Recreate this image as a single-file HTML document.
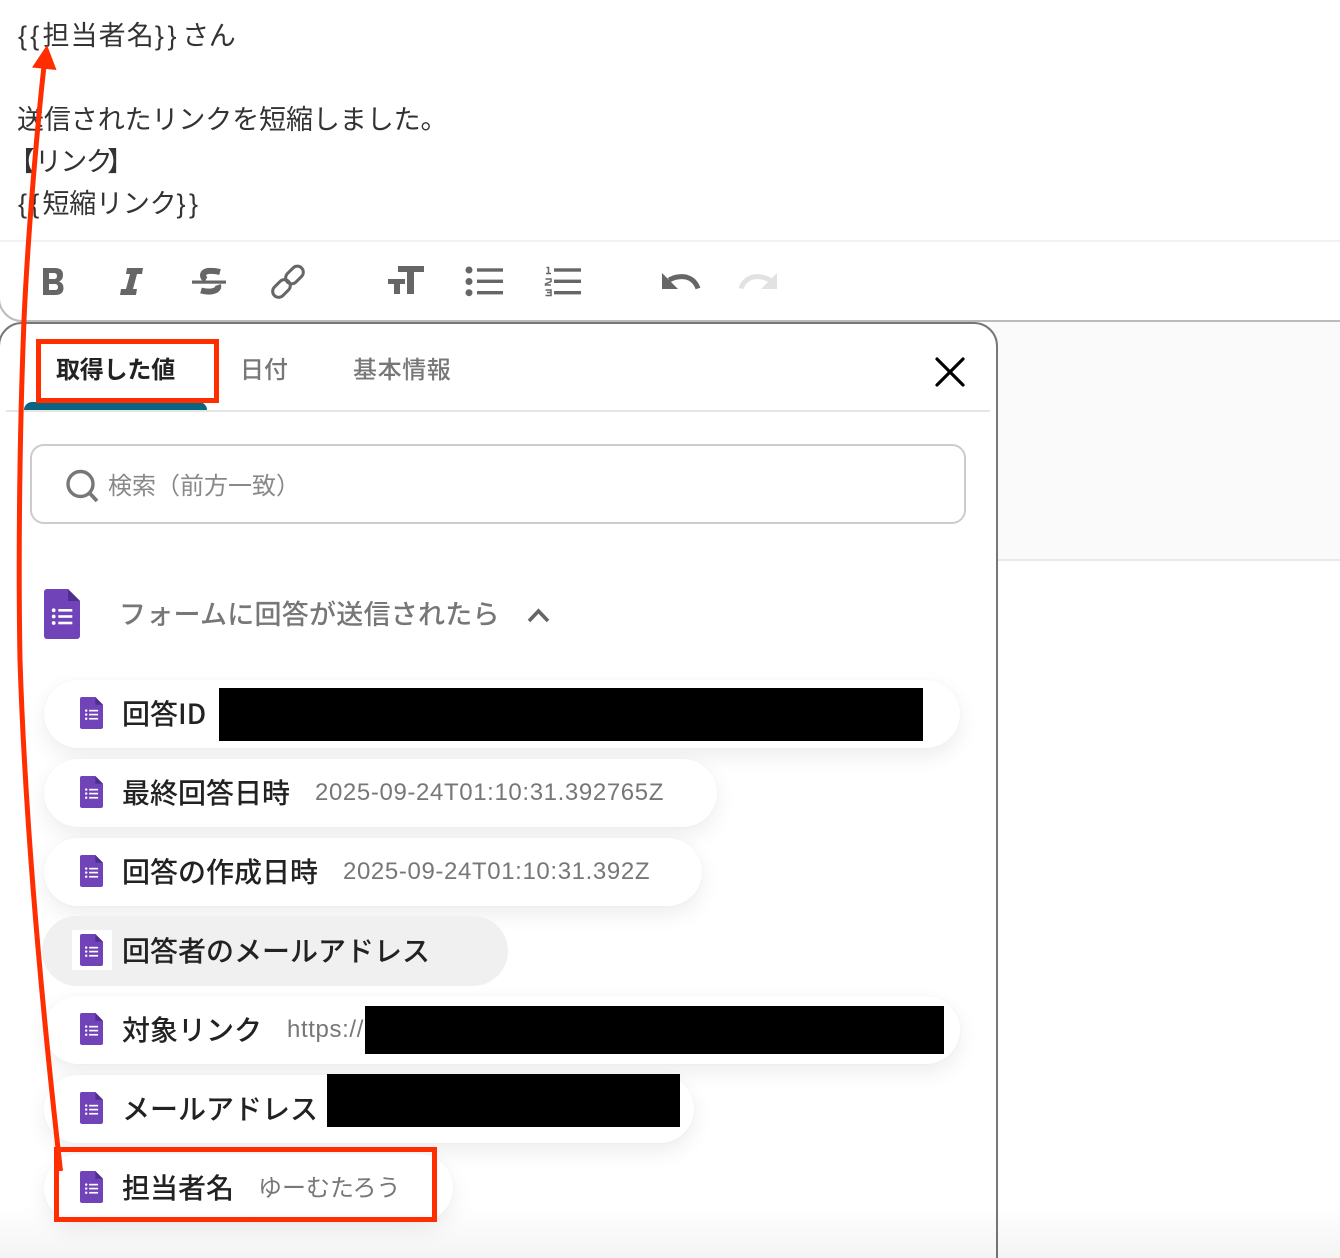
<!DOCTYPE html>
<html lang="ja"><head><meta charset="utf-8"><title>担当者名</title>
<style>
html,body{margin:0;padding:0;background:#fff;width:1340px;height:1258px;overflow:hidden}
body{font-family:"Liberation Sans","Noto Sans CJK JP",sans-serif;color:#222}
#root{position:relative;width:1340px;height:1258px;overflow:hidden}
div{box-sizing:border-box}
.a{position:absolute}
.t{position:absolute;white-space:nowrap}
.ed{font-size:27px;line-height:42px;color:#333;height:42px;left:17px;letter-spacing:-.1px}
.ed b{font-weight:400;letter-spacing:3.6px}
.tab{position:absolute;white-space:nowrap;font-size:24px;line-height:36px;height:36px;top:350px;color:#777;font-weight:500;font-family:"Noto Sans CJK JP",sans-serif}
.pill{position:absolute;left:44px;height:68px;border-radius:34px;background:#fff;box-shadow:0 8px 22px rgba(0,0,0,.075),0 0 3px rgba(0,0,0,.03)}
.lb{position:absolute;left:122px;font-size:28px;line-height:40px;height:40px;white-space:nowrap;font-weight:500;color:#222;font-family:"Noto Sans CJK JP",sans-serif}
.v{position:absolute;font-size:24px;line-height:36px;height:36px;white-space:nowrap;color:#777;letter-spacing:.62px}
.ic{position:absolute;left:80px;width:23px;height:32px}
.k{position:absolute;background:#000}
.r{position:absolute;border:5px solid #ff2d00}
</style></head>
<body><div id="root">
<svg width="0" height="0" style="position:absolute"><defs>
<symbol id="f" viewBox="0 0 36 50">
<path fill="#7044b8" d="M3 0H24L36 12V47a3 3 0 0 1-3 3H3a3 3 0 0 1-3-3V3a3 3 0 0 1 3-3Z"/>
<path fill="#4f2e92" d="M24 0L36 12H24Z"/>
<g fill="#fff"><circle cx="9.7" cy="21.3" r="1.9"/><circle cx="9.7" cy="27.5" r="1.9"/><circle cx="9.7" cy="34" r="1.9"/><rect x="14.3" y="20" width="14" height="2.6"/><rect x="14.3" y="26.2" width="14" height="2.6"/><rect x="14.3" y="32.7" width="14" height="2.6"/></g>
</symbol></defs></svg>

<!-- right background -->
<div class="a" style="left:990px;top:322px;width:350px;height:239px;background:#fafafa;border-bottom:2px solid #e9e9e9"></div>

<!-- editor -->
<div class="a" style="left:-2px;top:-30px;width:1360px;height:352px;border:2px solid #bbb;border-radius:0 0 0 24px;background:#fff"></div>
<div class="a" style="left:0;top:240px;width:1340px;height:2px;background:#f2f2f2"></div>
<div class="t ed" style="top:15px;left:18px"><b style="letter-spacing:3.2px">{{</b><span style="letter-spacing:1.1px">担当者名</span><b>}}</b><span style="margin-left:2px;letter-spacing:-.3px">さん</span></div>
<div class="t ed" style="top:99px">送信されたリンクを短縮しました。</div>
<div class="t ed" style="top:141px"><span style="margin-left:-9px">【</span><span style="letter-spacing:-1.6px">リンク</span><span style="margin-left:-4px">】</span></div>
<div class="t ed" style="top:183px;left:18px"><b style="letter-spacing:3.2px">{{</b><span style="letter-spacing:-.2px">短縮リンク</span><b>}}</b></div>

<!-- toolbar -->
<svg class="a" style="left:0;top:0" width="800" height="320" viewBox="0 0 800 320">
<g fill="#666">
<path fill-rule="evenodd" d="M43 268H55Q63 268 63 275Q63 280 59 281.5Q63.5 283 63.5 288Q63.5 295 55 295H43ZM49 273V279H54Q57 279 57 276Q57 273 54 273ZM49 284V290H55Q58 290 58 287Q58 284 55 284Z"/>
<path d="M127 268H143L142 274H137L133 289H137L136 295H120L121 289H126L130 274H126Z"/>
<rect x="192" y="280.5" width="34" height="3.2"/>
<path d="M398 266H424V272H414V294H407V272H398Z"/>
<path d="M388 279H405V284H400V294H394V284H388Z"/>
<circle cx="469" cy="270" r="3.5"/><circle cx="469" cy="281.5" r="3.5"/><circle cx="469" cy="292.7" r="3.5"/>
<rect x="477" y="268.3" width="26" height="3.4"/><rect x="477" y="279.6" width="26" height="3.4"/><rect x="477" y="291" width="26" height="3.4"/>
<rect x="554" y="268.3" width="27" height="3.4"/><rect x="554" y="279.6" width="27" height="3.4"/><rect x="554" y="291" width="27" height="3.4"/>
<path d="M662 273V289H678Z"/>
</g>
<path d="M220 272Q214 270.5 208 271Q203 272 203 275.5Q203 278 206 279.5" fill="none" stroke="#666" stroke-width="6"/>
<path d="M218 285Q219 288 216 290Q210 293 201 290.5" fill="none" stroke="#666" stroke-width="6"/>
<g fill="none" stroke="#666" stroke-width="3">
<rect x="284.5" y="269" width="20" height="12" rx="6" transform="rotate(-45 294.5 275)"/>
<rect x="271.5" y="282.5" width="20" height="12" rx="6" transform="rotate(-45 281.5 288.5)"/>
</g>
<g fill="none" stroke="#666" stroke-width="1.5">
<path d="M546.5 267.5H548.5V273.5M546 273.5H551"/>
<path d="M545.5 279H551V281.5L545.5 284V285H551"/>
<path d="M545.5 290H551V292.5H547M551 292.5V295.5H545.5"/>
</g>
<path d="M669 280Q677 275.5 686 277Q695 279.5 698 288.5" fill="none" stroke="#666" stroke-width="5"/>
<path d="M777 273V289H761Z" fill="#e2e2e2"/>
<path d="M770 280Q762 275.5 753 277Q744 279.5 741 288.5" fill="none" stroke="#e2e2e2" stroke-width="5"/>
</svg>

<!-- panel -->
<div class="a" style="left:-2px;top:322px;width:1000px;height:960px;background:#fff;border:2px solid #777;border-radius:24px 24px 0 0"></div>
<div class="a" style="left:6px;top:410px;width:984px;height:2px;background:#e5e5e5"></div>
<div class="a" style="left:24px;top:402px;width:183px;height:8px;background:#0a6583;border-radius:8px 8px 0 0"></div>
<div class="tab" style="left:56px;color:#222;font-weight:700;letter-spacing:-.2px">取得した値</div>
<div class="tab" style="left:240px">日付</div>
<div class="tab" style="left:353px;letter-spacing:.6px">基本情報</div>
<svg class="a" style="left:930px;top:352px" width="40" height="40"><path d="M7 7L33 33M33 7L7 33" stroke="#000" stroke-width="3.2" stroke-linecap="round" fill="none"/></svg>

<!-- search -->
<div class="a" style="left:30px;top:444px;width:936px;height:80px;border:2px solid #ccc;border-radius:14px;background:#fff"></div>
<svg class="a" style="left:60px;top:464px" width="44" height="44" fill="none" stroke="#777"><circle cx="20.5" cy="20" r="12.5" stroke-width="3.4"/><path d="M29.5 29L37 37" stroke-width="3.8"/></svg>
<div class="t" style="left:108px;top:466px;font-size:24px;line-height:36px;color:#888;font-family:'Noto Sans CJK JP',sans-serif;font-weight:400">検索（前方一致）</div>

<!-- section -->
<svg class="a" style="left:44px;top:589px" width="36" height="50"><use href="#f"/></svg>
<div class="t" style="left:119px;top:593px;font-size:27px;line-height:40px;letter-spacing:.25px;color:#777;font-weight:500;font-family:'Noto Sans CJK JP',sans-serif">フォームに回答が送信されたら</div>
<svg class="a" style="left:524px;top:604px" width="30" height="22"><path d="M5 17L14.5 7L24 17" fill="none" stroke="#666" stroke-width="3.6"/></svg>

<!-- rows -->
<div class="pill" style="top:680px;width:916px"></div>
<div class="pill" style="top:759px;width:673px"></div>
<div class="pill" style="top:838px;width:658px"></div>
<div class="pill" style="top:916px;left:42px;width:466px;height:70px;border-radius:35px;background:#f0f0f0;box-shadow:none"></div>
<div class="pill" style="top:996px;width:916px"></div>
<div class="pill" style="top:1075px;width:650px"></div>
<div class="pill" style="top:1154px;width:409px"></div>
<div class="a" style="left:72px;top:930px;width:40px;height:40px;background:#fff"></div>

<svg class="ic" style="top:697px"><use href="#f"/></svg>
<svg class="ic" style="top:776px"><use href="#f"/></svg>
<svg class="ic" style="top:855px"><use href="#f"/></svg>
<svg class="ic" style="top:934px"><use href="#f"/></svg>
<svg class="ic" style="top:1013px"><use href="#f"/></svg>
<svg class="ic" style="top:1092px"><use href="#f"/></svg>
<svg class="ic" style="top:1171px"><use href="#f"/></svg>

<div class="lb" style="top:693px">回答ID</div>
<div class="lb" style="top:772px">最終回答日時</div>
<div class="v" style="left:315px;top:775px">2025-09-24T01:10:31.392765Z</div>
<div class="lb" style="top:851px">回答の作成日時</div>
<div class="v" style="left:343px;top:854px">2025-09-24T01:10:31.392Z</div>
<div class="lb" style="top:930px">回答者のメールアドレス</div>
<div class="lb" style="top:1009px">対象リンク</div>
<div class="v" style="left:287px;top:1012px">https://</div>
<div class="lb" style="top:1088px">メールアドレス</div>
<div class="lb" style="top:1167px">担当者名</div>
<div class="v" style="left:258px;top:1168px;letter-spacing:0;font-family:'Noto Sans CJK JP',sans-serif;font-weight:400">ゆーむたろう</div>

<div class="k" style="left:219px;top:688px;width:704px;height:53px"></div>
<div class="k" style="left:365px;top:1006px;width:579px;height:48px"></div>
<div class="k" style="left:327px;top:1074px;width:353px;height:53px"></div>

<!-- bottom fade -->
<div class="a" style="left:0;top:1205px;width:1340px;height:53px;background:linear-gradient(rgba(0,0,0,0),rgba(0,0,0,.045));pointer-events:none"></div>

<!-- annotations -->
<div class="r" style="left:36px;top:339px;width:183px;height:64px"></div>
<div class="r" style="left:54px;top:1147px;width:383px;height:75px"></div>
<svg class="a" style="left:0;top:0" width="200" height="1258" viewBox="0 0 200 1258">
<path d="M60.5 1171C48 1060 26 850 20 660C18 550 20 420 24 320C28 230 38 120 44 66" fill="none" stroke="#ff2d00" stroke-width="5"/>
<path d="M47 45L56.5 70L32 67.5Z" fill="#ff2d00"/>
</svg>
</div></body></html>
